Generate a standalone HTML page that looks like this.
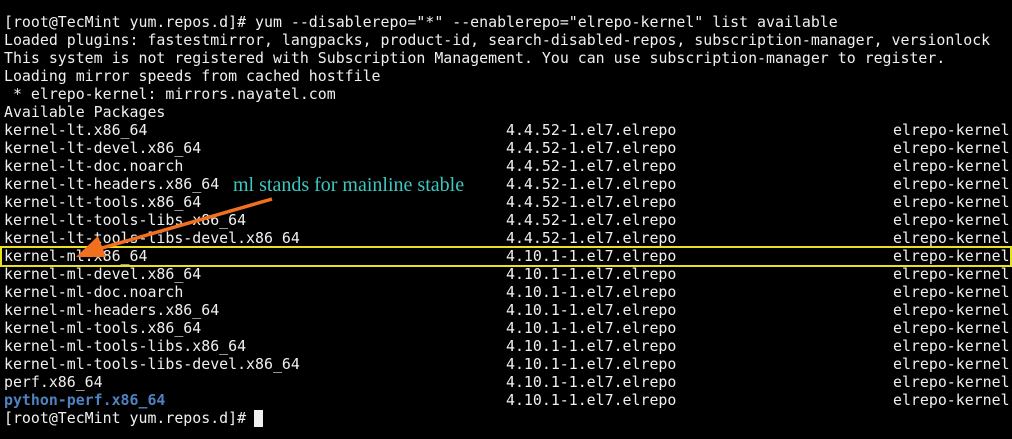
<!DOCTYPE html>
<html><head><meta charset="utf-8"><style>
html,body{margin:0;padding:0;background:#000;}
body{width:1012px;height:439px;position:relative;overflow:hidden;font-family:"DejaVu Sans Mono","Liberation Mono",monospace;font-size:14.9px;color:#f0f0f0;}
.l{position:absolute;left:4px;height:18px;line-height:18px;white-space:pre;margin-top:1px;}
.c2{position:absolute;left:506px;white-space:pre;line-height:18px;margin-top:1px;}
.c3{position:absolute;left:893px;white-space:pre;line-height:18px;margin-top:1px;}
.hl{position:absolute;left:0;top:246px;width:1008px;height:17px;border:2px solid #e8e020;}
.ann{position:absolute;left:233px;top:174px;font-family:"Liberation Serif",serif;font-size:20px;color:#3cc8c0;white-space:pre;}
.cur{position:absolute;left:254px;top:410px;width:9px;height:17px;background:#f0f0f0;}
</style></head><body>
<div class="l" style="top:12px">[root@TecMint yum.repos.d]# yum --disablerepo="*" --enablerepo="elrepo-kernel" list available</div>
<div class="l" style="top:30px">Loaded plugins: fastestmirror, langpacks, product-id, search-disabled-repos, subscription-manager, versionlock</div>
<div class="l" style="top:48px">This system is not registered with Subscription Management. You can use subscription-manager to register.</div>
<div class="l" style="top:66px">Loading mirror speeds from cached hostfile</div>
<div class="l" style="top:84px"> * elrepo-kernel: mirrors.nayatel.com</div>
<div class="l" style="top:102px">Available Packages</div>
<div class="l" style="top:120px">kernel-lt.x86_64</div><div class="c2" style="top:120px">4.4.52-1.el7.elrepo</div><div class="c3" style="top:120px">elrepo-kernel</div>
<div class="l" style="top:138px">kernel-lt-devel.x86_64</div><div class="c2" style="top:138px">4.4.52-1.el7.elrepo</div><div class="c3" style="top:138px">elrepo-kernel</div>
<div class="l" style="top:156px">kernel-lt-doc.noarch</div><div class="c2" style="top:156px">4.4.52-1.el7.elrepo</div><div class="c3" style="top:156px">elrepo-kernel</div>
<div class="l" style="top:174px">kernel-lt-headers.x86_64</div><div class="c2" style="top:174px">4.4.52-1.el7.elrepo</div><div class="c3" style="top:174px">elrepo-kernel</div>
<div class="l" style="top:192px">kernel-lt-tools.x86_64</div><div class="c2" style="top:192px">4.4.52-1.el7.elrepo</div><div class="c3" style="top:192px">elrepo-kernel</div>
<div class="l" style="top:210px">kernel-lt-tools-libs.x86_64</div><div class="c2" style="top:210px">4.4.52-1.el7.elrepo</div><div class="c3" style="top:210px">elrepo-kernel</div>
<div class="l" style="top:228px">kernel-lt-tools-libs-devel.x86_64</div><div class="c2" style="top:228px">4.4.52-1.el7.elrepo</div><div class="c3" style="top:228px">elrepo-kernel</div>
<div class="l" style="top:246px">kernel-ml.x86_64</div><div class="c2" style="top:246px">4.10.1-1.el7.elrepo</div><div class="c3" style="top:246px">elrepo-kernel</div>
<div class="l" style="top:264px">kernel-ml-devel.x86_64</div><div class="c2" style="top:264px">4.10.1-1.el7.elrepo</div><div class="c3" style="top:264px">elrepo-kernel</div>
<div class="l" style="top:282px">kernel-ml-doc.noarch</div><div class="c2" style="top:282px">4.10.1-1.el7.elrepo</div><div class="c3" style="top:282px">elrepo-kernel</div>
<div class="l" style="top:300px">kernel-ml-headers.x86_64</div><div class="c2" style="top:300px">4.10.1-1.el7.elrepo</div><div class="c3" style="top:300px">elrepo-kernel</div>
<div class="l" style="top:318px">kernel-ml-tools.x86_64</div><div class="c2" style="top:318px">4.10.1-1.el7.elrepo</div><div class="c3" style="top:318px">elrepo-kernel</div>
<div class="l" style="top:336px">kernel-ml-tools-libs.x86_64</div><div class="c2" style="top:336px">4.10.1-1.el7.elrepo</div><div class="c3" style="top:336px">elrepo-kernel</div>
<div class="l" style="top:354px">kernel-ml-tools-libs-devel.x86_64</div><div class="c2" style="top:354px">4.10.1-1.el7.elrepo</div><div class="c3" style="top:354px">elrepo-kernel</div>
<div class="l" style="top:372px">perf.x86_64</div><div class="c2" style="top:372px">4.10.1-1.el7.elrepo</div><div class="c3" style="top:372px">elrepo-kernel</div>
<div class="l" style="top:390px;color:#4f82c0;font-weight:bold">python-perf.x86_64</div><div class="c2" style="top:390px">4.10.1-1.el7.elrepo</div><div class="c3" style="top:390px">elrepo-kernel</div>
<div class="l" style="top:408px">[root@TecMint yum.repos.d]#</div>
<div class="cur"></div>
<div class="hl"></div>
<div class="ann">ml stands for mainline stable</div>
<svg style="position:absolute;left:0;top:0" width="1012" height="439">
<line x1="272" y1="199" x2="95" y2="250" stroke="#f07020" stroke-width="3.5"/>
<polygon points="76,257 98,236 106,257" fill="#f07020"/>
</svg>
</body></html>
